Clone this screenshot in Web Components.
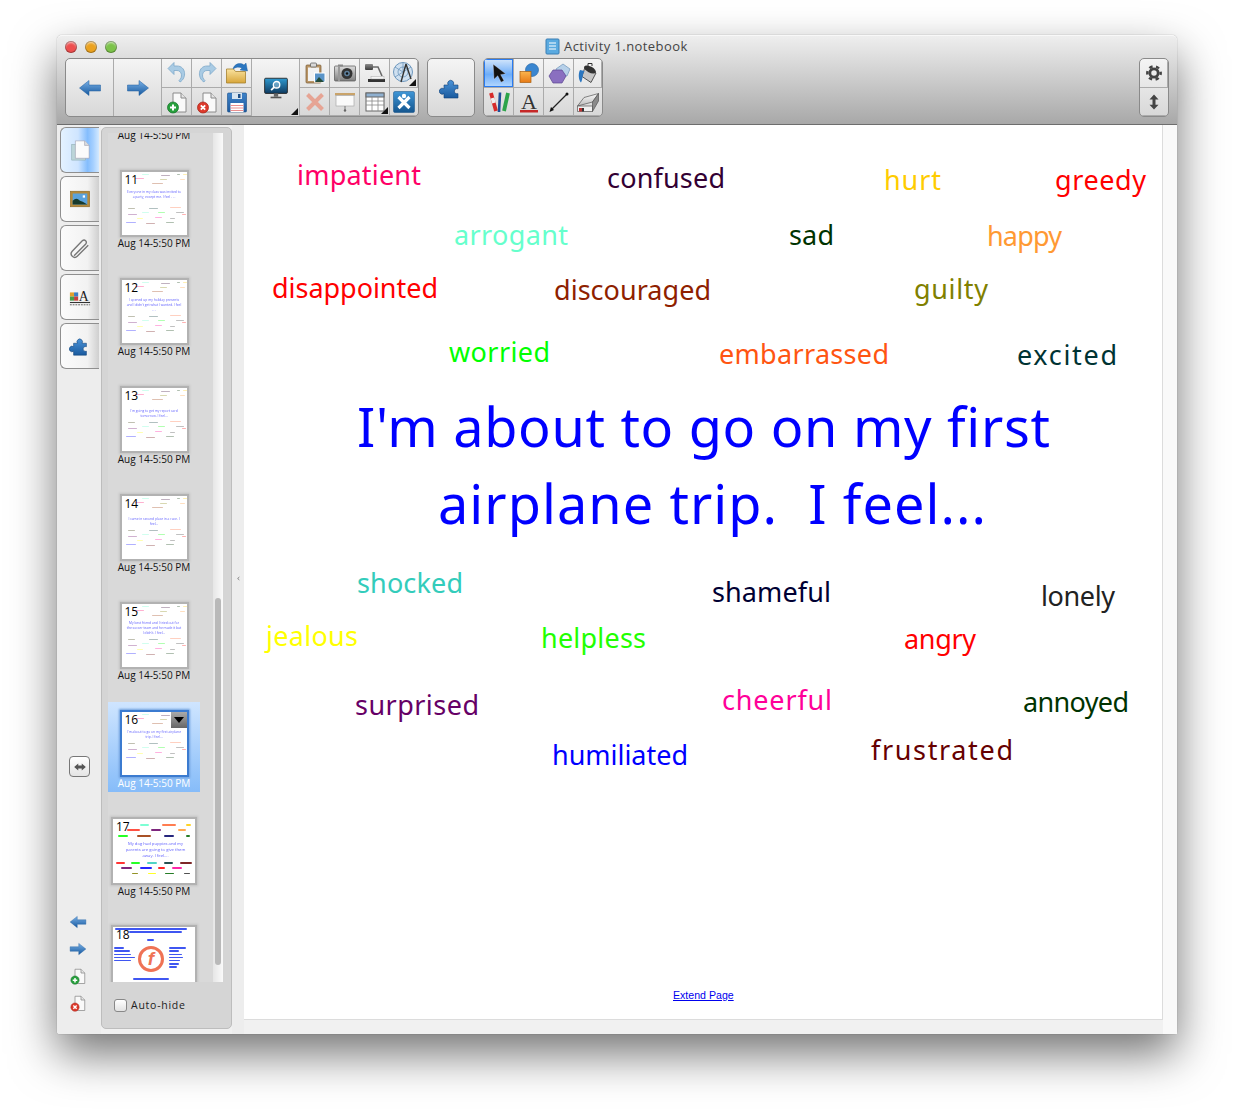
<!DOCTYPE html>
<html><head><meta charset="utf-8"><title>Activity 1.notebook</title>
<style>
html,body{margin:0;padding:0;background:#fff;height:1113px;overflow:hidden;font-family:"Open Sans","Liberation Sans",sans-serif}
body{display:flex;align-items:flex-start}
</style></head>
<body>
<app-window>
  <tool-bar slot="bar">
    <tool-group cols="48 48 30 30 30 48 30 30 30 28">
      <tool-btn tall icon="arrowL" size="24"></tool-btn>
      <tool-btn tall icon="arrowR" size="24"></tool-btn>
      <tool-btn icon="undo"></tool-btn><tool-btn icon="redo"></tool-btn><tool-btn icon="folder"></tool-btn>
      <tool-btn tall icon="monitor" menu size="26"></tool-btn>
      <tool-btn icon="clipboard"></tool-btn><tool-btn icon="camera"></tool-btn><tool-btn icon="doccam"></tool-btn><tool-btn icon="compass" menu></tool-btn>
      <tool-btn icon="docadd"></tool-btn><tool-btn icon="docdel"></tool-btn><tool-btn icon="save"></tool-btn>
      <tool-btn icon="xred"></tool-btn><tool-btn icon="screen"></tool-btn><tool-btn icon="table" menu></tool-btn><tool-btn icon="smart"></tool-btn>
    </tool-group>
    <tool-group cols="46" style="margin-left:8px"><tool-btn tall icon="puzzle" size="24"></tool-btn></tool-group>
    <tool-group cols="30 30 30 28" style="margin-left:8px">
      <tool-btn active icon="cursor" size="20"></tool-btn><tool-btn icon="shapes"></tool-btn><tool-btn icon="poly"></tool-btn><tool-btn icon="bucket"></tool-btn>
      <tool-btn icon="pens"></tool-btn><tool-btn icon="texta"></tool-btn><tool-btn icon="line"></tool-btn><tool-btn icon="eraser"></tool-btn>
    </tool-group>
    <tool-group cols="28" style="margin-left:auto">
      <tool-btn icon="gear" size="20"></tool-btn><tool-btn icon="updown" size="18"></tool-btn>
    </tool-group>
  </tool-bar>

  <side-tabs slot="tabs">
    <side-tab active icon="page"></side-tab>
    <side-tab icon="frame"></side-tab>
    <side-tab icon="clip"></side-tab>
    <side-tab icon="colora"></side-tab>
    <side-tab icon="puzzle"></side-tab>
  </side-tabs>

  <page-sorter slot="panel">
    <thumb-card class="first" date="Aug 14-5:50 PM" blank></thumb-card>
    <thumb-card n="11" date="Aug 14-5:50 PM" top="17" prompt="Everyone in my class was invited to a party, except me.  I feel . . ."></thumb-card>
    <thumb-card n="12" date="Aug 14-5:50 PM" top="17" prompt="I opened up my holiday presents and I didn't get what I wanted.  I feel . . ."></thumb-card>
    <thumb-card n="13" date="Aug 14-5:50 PM" top="20" prompt="I'm going to get my report card tomorrow.  I feel..."></thumb-card>
    <thumb-card n="14" date="Aug 14-5:50 PM" top="20" prompt="I came in second place in a race.  I feel..."></thumb-card>
    <thumb-card n="15" date="Aug 14-5:50 PM" top="16" prompt="My best friend and I tried out for the soccer team and he made it but I didn't.  I feel..."></thumb-card>
    <thumb-card n="16" date="Aug 14-5:50 PM" top="17" selected prompt="I'm about to go on my first airplane trip.  I feel..."></thumb-card>
    <thumb-card n="17" date="Aug 14-5:50 PM" wide top="22" kind="dog" prompt="My dog had puppies and my parents are going to give them away.  I feel...."></thumb-card>
    <thumb-card n="18" wide kind="logo"></thumb-card>
  </page-sorter>

  <white-board slot="board">
    <board-word x="297" w="124" y="175" c="#ff0066">impatient</board-word>
    <board-word x="607" w="118" y="178" c="#330033">confused</board-word>
    <board-word x="884" w="57" y="180" c="#ffcc00">hurt</board-word>
    <board-word x="1055" w="91" y="180" c="#ff0000">greedy</board-word>
    <board-word x="454" w="114" y="235" c="#66ffcc">arrogant</board-word>
    <board-word x="789" w="45" y="235" c="#003300">sad</board-word>
    <board-word x="987" w="75" y="236" c="#ff9933">happy</board-word>
    <board-word x="272" w="166" y="288" c="#ff0000">disappointed</board-word>
    <board-word x="554" w="157" y="290" c="#8f1f00">discouraged</board-word>
    <board-word x="914" w="74" y="289" c="#808000">guilty</board-word>
    <board-word x="449" w="101" y="352" c="#00ff00">worried</board-word>
    <board-word x="719" w="170" y="354" c="#ff5511">embarrassed</board-word>
    <board-word x="1017" w="100" y="355" c="#003333">excited</board-word>
    <board-word x="357" w="693" y="426" c="#0000ff" size="54">I'm about to go on my first</board-word>
    <board-word x="438" w="548" y="503" c="#0000ff" size="54">airplane trip.  I feel...</board-word>
    <board-word x="357" w="106" y="583" c="#33ccbb">shocked</board-word>
    <board-word x="712" w="119" y="592" c="#000033">shameful</board-word>
    <board-word x="1041" w="74" y="596" c="#222222">lonely</board-word>
    <board-word x="266" w="92" y="636" c="#ffff00">jealous</board-word>
    <board-word x="541" w="105" y="638" c="#22ff00">helpless</board-word>
    <board-word x="904" w="72" y="639" c="#ff0000">angry</board-word>
    <board-word x="355" w="124" y="705" c="#660066">surprised</board-word>
    <board-word x="722" w="110" y="700" c="#ff0099">cheerful</board-word>
    <board-word x="1023" w="106" y="702" c="#003300">annoyed</board-word>
    <board-word x="552" w="136" y="755" c="#0000ff">humiliated</board-word>
    <board-word x="871" w="142" y="750" c="#660000">frustrated</board-word>
  </white-board>
</app-window>

<script>
const grad=(id,a,b)=>`<defs><linearGradient id="${id}" x1="0" y1="0" x2="0" y2="1"><stop offset="0" stop-color="${a}"/><stop offset="1" stop-color="${b}"/></linearGradient></defs>`;
const PUZ=`${grad('pz','#4a93d8','#1a5a9e')}<path d="M5 9h4.200a3 3 0 1 1 5 0H19v3.800a2.600 2.600 0 1 0 0 4.800V22H5v-4.300a3 3 0 1 1 0-4.900z" fill="url(#pz)" stroke="#0f4078" stroke-width=".6"/>`;
const DOC=`<path d="M8 3h8l5 5v14H8z" fill="#f9f9f9" stroke="#8a8a8a"/><path d="M16 3v5h5" fill="#e4e4e4" stroke="#8a8a8a"/>`;
const ICONS={
arrowL:`${grad('a','#79b0e6','#17599f')}<path d="M1.500 12 11 4.500V9h11.500v6H11v4.500z" fill="url(#a)" stroke="#1c5c9e" stroke-width=".5"/>`,
arrowR:`${grad('a','#79b0e6','#17599f')}<path d="M22.500 12 13 4.500V9H1.500v6H13v4.500z" fill="url(#a)" stroke="#1c5c9e" stroke-width=".5"/>`,
undo:`<path d="M15 21C22 17 21 5 12 5H9V1.500L3 7.500l6 6V9.500h3c5 0 6 7 2 10z" fill="#a9cbe4" stroke="#7ea8c9" stroke-width=".8"/>`,
redo:`<path d="M9 21C2 17 3 5 12 5h3V1.500l6 6-6 6V9.500h-3c-5 0-6 7-2 10z" fill="#a9cbe4" stroke="#7ea8c9" stroke-width=".8"/>`,
folder:`${grad('f','#fae3a0','#d8a63a')}<path d="M1.500 8h7l2 2.500h10V22h-19z" fill="url(#f)" stroke="#a5812f" stroke-width=".8"/><path d="M8 8c1-5 7-7 11-4l2-2 1.500 8-7.500-1 2-2c-3-1.500-6-1-9 1z" fill="#2a76c0" stroke="#1b5a9a" stroke-width=".4"/>`,
docadd:`${DOC}<circle cx="8" cy="17.500" r="5.500" fill="#27a03c" stroke="#14702a" stroke-width=".7"/><path d="M8 14.500v6M5 17.500h6" stroke="#fff" stroke-width="2"/>`,
docdel:`${DOC}<circle cx="8" cy="17.500" r="5.500" fill="#dd3a2c" stroke="#a52418" stroke-width=".7"/><path d="M5.800 15.300l4.400 4.400M10.200 15.300l-4.400 4.400" stroke="#fff" stroke-width="1.800"/>`,
save:`${grad('s','#3f83c9','#1e5a9e')}<rect x="2.500" y="3" width="19" height="19" rx="1" fill="url(#s)" stroke="#174d88" stroke-width=".6"/><rect x="7" y="3" width="10" height="6" fill="#d6e4f0"/><rect x="13" y="4" width="2.500" height="4" fill="#1e4f86"/><rect x="5.500" y="13" width="13" height="9" fill="#fff"/><path d="M5.500 15.500h13M5.500 18h13M5.500 20.500h13" stroke="#e98f8f"/>`,
monitor:`${grad('m','#2f9ad0','#0f3a60')}<rect x="1.500" y="3" width="21" height="14" rx="1" fill="url(#m)" stroke="#222" stroke-width=".8"/><circle cx="12.500" cy="9" r="3" fill="#cfe6f5" fill-opacity=".4" stroke="#fff" stroke-width="1.200"/><path d="M10.300 11.200 7.500 14" stroke="#fff" stroke-width="1.600"/><rect x="10" y="17" width="4" height="3" fill="#666"/><rect x="7" y="20" width="10" height="1.500" fill="#555"/>`,
clipboard:`<rect x="3" y="4" width="15" height="18" rx="1" fill="#b99668" stroke="#7a5a30" stroke-width=".7"/><rect x="5" y="6.500" width="11" height="13.500" fill="#f2f2f2"/><rect x="7.500" y="2" width="6" height="4" rx="1" fill="#d8d8d8" stroke="#555" stroke-width=".7"/><rect x="11.500" y="12" width="10.500" height="9" fill="#5a94c8" stroke="#fff"/><path d="M12 21l4-5 5 5z" fill="#234a38"/>`,
camera:`${grad('c','#dcdcdc','#7f7f7f')}<rect x="1.500" y="5" width="21" height="15" rx="1" fill="url(#c)" stroke="#555" stroke-width=".7"/><rect x="5" y="3.500" width="5" height="2" fill="#888"/><rect x="5" y="5" width="2" height="15" fill="#999"/><circle cx="14" cy="12.500" r="5.500" fill="#333"/><circle cx="14" cy="12.500" r="2.800" fill="#5d7f9c"/><circle cx="14" cy="12.500" r="1.200" fill="#111"/>`,
doccam:`${grad('dc','#8c8c8c','#3d3d3d')}<rect x="2" y="3" width="8" height="6" rx="1" fill="url(#dc)"/><path d="M10 6h5l4 9" fill="none" stroke="#6a6a6a" stroke-width="1.600"/><rect x="5" y="18" width="17" height="3" fill="#333"/><rect x="8" y="15.500" width="13" height="2.500" fill="#f4f4f4" stroke="#999" stroke-width=".4"/>`,
compass:`<circle cx="11" cy="11" r="9.500" fill="#cfe0f0" stroke="#6d97bd"/><path d="M11 11 3 6M11 11 3 16M11 11 11 2M11 11 19 6" stroke="#6d97bd" stroke-width=".8"/><circle cx="11" cy="11" r="5" fill="none" stroke="#6d97bd" stroke-width=".8"/><path d="M14 3 9 21M14 3l5 15" stroke="#333" stroke-width="1.400" fill="none"/>`,
xred:`<path d="M4.500 4.500l15 15M19.500 4.500l-15 15" stroke="#e6a494" stroke-width="4"/>`,
screen:`<rect x="2" y="3" width="20" height="2.500" fill="#c9a36a"/><rect x="3" y="5.500" width="18" height="10.500" fill="#fafafa" stroke="#aaa" stroke-width=".7"/><path d="M12 16v4" stroke="#777"/><circle cx="12" cy="20.500" r="1.200" fill="#666"/>`,
table:`<rect x="3" y="3" width="18" height="18" fill="#fff" stroke="#666"/><rect x="3" y="3" width="18" height="4" fill="#8fb0d0" stroke="#666"/><path d="M3 11h18M3 15h18M9 7v14M15 7v14" stroke="#888" stroke-width=".8"/>`,
smart:`${grad('sm','#4096d6','#14568f')}<rect x="1.500" y="1.500" width="21" height="21" rx="1.500" fill="url(#sm)" stroke="#134f85" stroke-width=".5"/><path d="M6.500 7l11 11M17.500 7l-11 11" stroke="#fff" stroke-width="3.200"/><circle cx="12" cy="6" r="2.200" fill="#fff"/>`,
puzzle:PUZ,
cursor:`<path d="M5 1.500 6 19.500 10.500 15.300 14.500 23l3.500-1.800-4-7.200 6-1z" fill="#111" stroke="#eef" stroke-width=".4"/>`,
shapes:`${grad('o','#fbb54e','#e77a16')}<circle cx="15" cy="9" r="6.500" fill="#3a86d0" stroke="#1f5fa0" stroke-width=".6"/><rect x="3" y="10.500" width="11" height="11" fill="url(#o)" stroke="#a85e10" stroke-width=".7"/>`,
poly:`<path d="M9 8l7-5 7 5-3 7-9-1z" fill="#b6d0e9" stroke="#6f93b8" stroke-width=".7"/><path d="M2 15l4-6h9l4 6-4 7H6z" fill="#8a6fc0" stroke="#5a4590" stroke-width=".7"/>`,
bucket:`<path d="M9 6l11 6-5 9.500-9-6z" fill="#c6c6c6" stroke="#333" stroke-width=".8"/><ellipse cx="14" cy="8.500" rx="6.500" ry="3" transform="rotate(28 14 8.500)" fill="#333"/><path d="M4 9c-2 4-1.500 10 1 12.500 2-3 1-8 3.500-11.500z" fill="#2a76c0"/><path d="M12 7V2.500h4V5" fill="none" stroke="#333"/>`,
pens:`<path d="M4 3l5 18" stroke="#d62b2b" stroke-width="3.800"/><path d="M5.500 8l1.400 5" stroke="#eee" stroke-width="3.800"/><path d="M13 2.500l-1 19.500" stroke="#1f4f98" stroke-width="2.600"/><path d="M21 3l-4 18" stroke="#2da44a" stroke-width="3.800"/>`,
texta:`<text x="12" y="18.500" font-family="Liberation Serif" font-size="22" text-anchor="middle" fill="#333">A</text><rect x="3" y="20" width="18" height="2.500" fill="#c62828"/>`,
line:`<path d="M4.500 19.500l15-15" stroke="#222" stroke-width="1.300"/><path d="M2.500 22l1.500-5 3 3z" fill="#111"/><circle cx="20" cy="4" r="1.500" fill="#111"/>`,
eraser:`${grad('e','#fafafa','#bdbdbd')}<path d="M1.500 16 8 7.500 22.500 3.500 16.500 12z" fill="url(#e)" stroke="#555" stroke-width=".7"/><path d="M1.500 16h15v5.500h-15z" fill="#f0f0f0" stroke="#555" stroke-width=".7"/><path d="M16.500 12l6-8.500v7.500l-6 10.500z" fill="#8a8a8a" stroke="#555" stroke-width=".7"/><rect x="3" y="18" width="3" height="3.500" fill="#b33"/><rect x="6" y="18" width="2" height="3.500" fill="#333"/>`,
gear:`<circle cx="12" cy="12" r="5" fill="none" stroke="#444" stroke-width="3.400"/><circle cx="12" cy="12" r="8" fill="none" stroke="#444" stroke-width="3" stroke-dasharray="4.200 4.180" stroke-dashoffset="2"/>`,
updown:`<path d="M12 2l6 6.500h-4v7h4L12 22l-6-6.500h4v-7H6z" fill="#444"/>`,
page:`<rect x="3" y="6" width="15" height="17" fill="#bcd5d9" stroke="#8aa9ad" stroke-width=".6"/><path d="M7 2h10l5 5v14H7z" fill="#fbfbfb" stroke="#99a" stroke-width=".6"/><path d="M17 2v5h5" fill="#ddd" stroke="#99a" stroke-width=".6"/>`,
frame:`<rect x="1.500" y="3.500" width="21" height="17" fill="#b68a3a" stroke="#7f5f22" stroke-width=".6"/><rect x="4" y="6" width="16" height="12" fill="#5aa2dc"/><path d="M4 18v-4c3-3 5-3 8 0l3 1 5 3z" fill="#173a2c"/><rect x="15" y="8" width="2.500" height="2.500" fill="#fff"/>`,
clip:`<path d="M5.500 19.500 18 7c2.500-3-1-6-3.500-3.800L3.500 14.500c-3.500 4 2 9 5.500 5.500L21 8" fill="none" stroke="#777" stroke-width="1.500" transform="translate(0 1)"/>`,
colora:`<rect x="1" y="7" width="4.500" height="4.500" fill="#e3a02c"/><rect x="5.500" y="7" width="4.500" height="4.500" fill="#3d7fc4"/><rect x="1" y="11.500" width="4.500" height="4.500" fill="#4a9d4a"/><rect x="5.500" y="11.500" width="4.500" height="4.500" fill="#c64040"/><text x="16" y="16" font-family="Liberation Serif" font-size="15" text-anchor="middle" fill="#222">A</text><path d="M1 18h22" stroke="#333" stroke-width="1.200"/><path d="M1 20.500h22" stroke="#555" stroke-dasharray="2 1"/>`,
swap:`<path d="M2 12l7-6v3.500h6V6l7 6-7 6v-3.500H9V18z" fill="#555"/>`,
grip:`<path d="M15 7l-6 5 6 5" fill="none" stroke="#777" stroke-width="3"/>`
};
const svg=(n,s)=>`<svg width="${s}" height="${s}" viewBox="0 0 24 24" aria-hidden="true" style="display:block">${ICONS[n]}</svg>`;
const host=(el,html)=>{el.attachShadow({mode:'open'}).innerHTML=html};

class AppWindow extends HTMLElement{connectedCallback(){host(this,`<style>
:host{display:flex;flex-direction:column;width:1120px;height:999px;margin:35px 0 0 57px;background:#f7f7f7;border-radius:5px 5px 3px 3px;box-shadow:0 20px 46px rgba(0,0,0,.55),0 0 1px rgba(0,0,0,.5);flex:none}
.main{flex:1;display:grid;grid-template-columns:44px 131px 12px 919px 14px;min-height:0;background:#f1f1f1;border-radius:0 0 3px 3px}
.div{background:#ededed;display:flex;align-items:center;justify-content:center}
.div svg{margin-top:-2px}
.right{background:#f9f9f9}
</style>
<slot name="bar"></slot>
<div class="main">
<slot name="tabs"></slot>
<slot name="panel"></slot>
<div class="div">${svg('grip',7)}</div>
<slot name="board"></slot>
<div class="right"></div>
</div>`)}}
class ToolBar extends HTMLElement{connectedCallback(){host(this,`<style>
:host{display:block;height:90px;box-sizing:border-box;border-radius:5px 5px 0 0;background:linear-gradient(#eeeeee,#e4e4e4 15%,#a8a8a8);border-bottom:1px solid #6d6d6d;border-top:1px solid #f8f8f8;font-family:"Open Sans","Liberation Sans",sans-serif}
.title{height:22px;display:flex;align-items:center;position:relative}
.lights{display:flex;gap:8px;padding-left:8px}
.l{width:12px;height:12px;border-radius:50%;box-shadow:inset 0 0 0 1px rgba(0,0,0,.3),inset 0 2px 2px rgba(255,255,255,.6)}
.t{position:absolute;left:488px;top:1px;display:flex;align-items:center;gap:4px;font-size:13px;color:#444;letter-spacing:.42px;white-space:nowrap}
.row{display:flex;padding:0 8px;height:60px}
</style>
<div class="title"><div class="lights"><div class="l" style="background:#ee4f4f"></div><div class="l" style="background:#eba21f"></div><div class="l" style="background:#7cc34a"></div></div>
<div class="t"><svg width="15" height="17" viewBox="0 0 15 17" aria-hidden="true"><rect x="1" y="1" width="13" height="15" rx="1" fill="#5aaae0" stroke="#3a7fb4"/><path d="M4 5h7M4 8h7M4 11h7" stroke="#fff"/></svg>Activity 1.notebook</div></div>
<div class="row"><slot></slot></div>`)}}
class ToolGroup extends HTMLElement{connectedCallback(){const c=this.getAttribute('cols').split(' ').map(x=>x+'px').join(' ');host(this,`<style>
:host{display:grid;grid-template-columns:${c};grid-template-rows:29px 28px;align-self:start;border:1px solid #8a8a8a;border-radius:5px;overflow:hidden;background:linear-gradient(#f4f4f4,#d8d8d8)}
</style><slot></slot>`);}}
class ToolBtn extends HTMLElement{connectedCallback(){const s=this.getAttribute('size')||24,t=this.hasAttribute('tall'),a=this.hasAttribute('active'),m=this.hasAttribute('menu');
host(this,`<style>
:host{display:flex;align-items:center;justify-content:center;position:relative;box-sizing:border-box;border-right:1px solid #ababab;border-bottom:1px solid #ababab;${t?'grid-row:span 2;border-bottom:none;':''}${a?'background:linear-gradient(#d4e6fb,#6eadf8 55%,#b5d8ff);box-shadow:inset 0 0 0 1px #2a7bf0;':''}}
:host(:last-child){border-right:none}
.m{position:absolute;right:1px;bottom:1px;width:0;height:0;border-left:7px solid transparent;border-bottom:7px solid #111}
</style>${svg(this.getAttribute('icon'),s)}${m?'<div class="m"></div>':''}`)}}
class SideTabs extends HTMLElement{connectedCallback(){host(this,`<style>
:host{display:flex;flex-direction:column;padding:2px 2px 22px 3px;background:#ededed;gap:3px;border-radius:0 0 0 3px;min-height:0}
.sw{margin:384px 0 0 9px;width:21px;height:21px;box-sizing:border-box;border:1px solid #777;border-radius:4px;background:linear-gradient(#fff,#e4e4e4);display:flex;align-items:center;justify-content:center}
.nav{margin-top:auto;display:flex;flex-direction:column;gap:9px;padding-left:9px}
</style><slot></slot><div class="sw">${svg('swap',14)}</div>
<div class="nav">${svg('arrowL',18)}${svg('arrowR',18)}${svg('docadd',18)}${svg('docdel',18)}</div>`)}}
class SideTab extends HTMLElement{connectedCallback(){const a=this.hasAttribute('active');host(this,`<style>
:host{display:flex;align-items:center;justify-content:center;height:46px;box-sizing:border-box;border:1px solid #8f8f8f;border-right:none;border-radius:6px 0 0 6px;padding-right:0;background:${a?'linear-gradient(90deg,#e4f2ff,#cfe5ff 45%,#84bdfd 70%,#a6d0ff 85%,#d3e9ff)':'linear-gradient(90deg,#fbfbfb,#f2f2f2 70%,#cfcfcf)'}}
</style>${svg(this.getAttribute('icon'),22)}`)}}
class PageSorter extends HTMLElement{connectedCallback(){host(this,`<style>
:host{display:flex;flex-direction:column;box-sizing:border-box;height:902px;margin-top:2px;border:1px solid #bdbdbd;border-radius:5px;background:#d5d5d5;padding:5px 8px 0 6px;min-height:0}
.body{display:flex;height:849px;flex:none}
.list{width:105px;overflow:hidden;background:#d9d9d9;display:flex;flex-direction:column;align-items:flex-start}
.track{width:10px;background:linear-gradient(90deg,#e6e6e6,#fafafa);padding:0 2px;box-sizing:border-box}
.thumb{height:367px;margin-top:465px;width:6px;background:#b9b9b9;border-radius:3px}
.foot{display:flex;align-items:center;gap:4px;padding:16px 0 0 6px;font-size:10.500px;color:#222;letter-spacing:.75px;line-height:14px}
.box{width:13px;height:13px;box-sizing:border-box;border:1px solid #888;border-radius:3px;background:linear-gradient(#fff,#e2e2e2)}
::slotted(.first){margin-top:-79px}
</style><div class="body"><div class="list"><slot></slot></div><div class="track"><div class="thumb"></div></div></div>
<div class="foot"><div class="box"></div><span>Auto-hide</span></div>`)}}
const PALE=[[20,2,7,'#66ffcc'],[39,3,9,'#330033'],[55,2,3,'#003300'],[61,2,4,'#ffcc00'],[13,6,9,'#ff0066'],[38,7,7,'#808000'],[58,7,5,'#ff9933'],[30,11,11,'#993300']];
const PALE2=[[6,3,7,'#333300'],[27,3,9,'#003333'],[48,2,11,'#ff6633'],[6,9,9,'#660066'],[20,7,7,'#66ffcc'],[36,7,7,'#00ff00'],[54,7,8,'#333333'],[15,13,6,'#ffff00'],[33,12,7,'#ff0099'],[48,13,5,'#333333'],[60,9,4,'#ff0000'],[4,17,10,'#0000ff'],[24,18,9,'#660000'],[44,17,8,'#003300']];
const DOG=[[250,278,405,'#66ffcc'],[316,360,405,'#ff6633'],[388,404,405,'#ffcc00'],[213,252,421,'#ff3322'],[283,313,421,'#660066'],[366,388,421,'#ff9933'],[186,214,438,'#00ff00'],[243,285,438,'#993300'],[323,354,438,'#000066'],[389,401,438,'#006600'],[180,205,519,'#ff1111'],[225,252,519,'#00ff00'],[273,301,519,'#33ccbb'],[323,349,519,'#003333'],[370,408,519,'#660000'],[195,228,535,'#660066'],[252,288,535,'#0000ff'],[306,326,535,'#ff0000'],[348,377,535,'#ff0099'],[228,246,551,'#808000'],[274,298,551,'#ffff00'],[325,354,551,'#006600'],[382,402,551,'#333333']];
const LOGO=[[185,400,88],[225,385,97],[280,302,122],[182,212,146],[182,228,155],[182,233,165],[182,245,174],[182,232,183],[345,398,146],[345,375,155],[345,385,165],[345,388,174],[345,380,183],[345,375,193],[345,370,202],[238,345,238]];
const bar=(x,y,w,c,h,o,b)=>`<i style="left:${x}px;top:${y}px;width:${w}px;height:${h}px;background:${c};opacity:${o}${b?';filter:blur(.4px)':''}"></i>`;
class ThumbCard extends HTMLElement{connectedCallback(){const wide=this.hasAttribute('wide'),sel=this.hasAttribute('selected'),kind=this.getAttribute('kind'),n=this.getAttribute('n'),p=this.getAttribute('prompt'),top=+this.getAttribute('top')||0,blank=this.hasAttribute('blank'),date=this.getAttribute('date');
let bars='';
if(kind==='dog')bars=DOG.map(b=>bar((b[0]-170)/3,(b[2]-388)/3-.8,(b[1]-b[0])/3,b[3],1.700,.85)).join('');
else if(kind==='logo')bars=LOGO.map(b=>bar((b[0]-178)/3,(b[2]-85)/3,(b[1]-b[0])/3,'#2a44f0',1.600,.9)).join('')+`<div class="f">f</div>`;
else if(!blank){const lines=p.length>60?3:2;const y0=top+lines*5+1;bars=PALE.map(b=>bar(b[0],b[1],b[2],b[3],1.300,.3,1)).join('')+PALE2.map(b=>bar(b[0],b[1]+y0,b[2],b[3],1.300,.3,1)).join('')}
host(this,`<style>
:host{display:flex;flex-direction:column;align-items:center;width:92px;height:90px;margin-bottom:18px;flex:none;box-sizing:border-box;padding-top:${wide?9:10}px;${sel?'background:linear-gradient(#cfe5ff,#86bcf9);':''}}
.th{position:relative;width:${wide?82:65}px;height:${wide?64:63}px;background:#fff;box-shadow:0 0 0 2px ${sel?'#3b7bd0':'#b2b2b2'},0 0 2px 3px ${sel?'#6f9fdc':'#c4c4c4'};overflow:hidden;flex:none;${blank?'visibility:hidden':''}}
.th i{position:absolute;display:block;border-radius:1px}
.n{position:absolute;left:3px;top:1px;font-size:12px;line-height:14px;color:#000;font-family:"Open Sans",sans-serif}
.p{position:absolute;left:${wide?12:5}px;right:${wide?9:5}px;top:${top}px;text-align:center;color:#6060ff;font-family:"Open Sans",sans-serif;font-size:${wide?4.200:3.300}px;line-height:${wide?6:5}px;filter:blur(.15px)}
.f{position:absolute;left:${(292-178)/3-13}px;top:${(180-85)/3-13}px;width:20px;height:20px;border:3px solid #ef7355;border-radius:50%;color:#ef7355;font:italic bold 19px/20px "Liberation Sans",sans-serif;text-align:center}
.d{position:absolute;right:0;top:0;width:16px;height:16px;background:linear-gradient(#aaa,#666);display:flex;align-items:center;justify-content:center}
.d:after{content:"";border:5px solid transparent;border-top:6px solid #000;border-bottom:0}
.c{margin-top:auto;padding-bottom:2px;line-height:14px;font-size:10px;color:${sel?'#fff':'#111'};white-space:nowrap;font-family:"Open Sans",sans-serif}
</style><div class="th">${bars}${n?`<div class="n">${n}</div>`:''}${p?`<div class="p">${p}</div>`:''}${sel?'<div class="d"></div>':''}</div>${date?`<div class="c">${date}</div>`:''}`)}}
class WhiteBoard extends HTMLElement{connectedCallback(){host(this,`<style>
:host{display:block;position:relative;background:#fff;height:895px;box-sizing:border-box;border-right:1px solid #dcdcdc;border-bottom:1px solid #dcdcdc;overflow:hidden}
a{position:absolute;left:429px;top:864px;font:10.600px/13px "Liberation Sans",sans-serif;color:#00e;text-decoration:underline}
</style><slot></slot><a href="#">Extend Page</a>`)}}
const ctx=document.createElement('canvas').getContext('2d');
class BoardWord extends HTMLElement{connectedCallback(){const x=+this.getAttribute('x'),w=+this.getAttribute('w'),y=+this.getAttribute('y'),c=this.getAttribute('c'),s=+this.getAttribute('size')||27,t=this.textContent;
const fam='"Noto Sans"';ctx.font=`${s}px ${fam}`;const m=ctx.measureText(t).width;const ls=(w-m)/(t.length-1);
host(this,`<style>
:host{position:absolute;left:${x-244}px;top:${y-125-s*.75}px;display:block;white-space:pre;color:${c};font:${s}px/${s*1.5}px ${fam},"Liberation Sans",sans-serif;letter-spacing:${ls}px}
</style><slot></slot>`)}}
[['app-window',AppWindow],['tool-bar',ToolBar],['tool-group',ToolGroup],['tool-btn',ToolBtn],['side-tabs',SideTabs],['side-tab',SideTab],['page-sorter',PageSorter],['thumb-card',ThumbCard],['white-board',WhiteBoard],['board-word',BoardWord]].forEach(([n,c])=>customElements.define(n,c));
</script>
</body></html>
